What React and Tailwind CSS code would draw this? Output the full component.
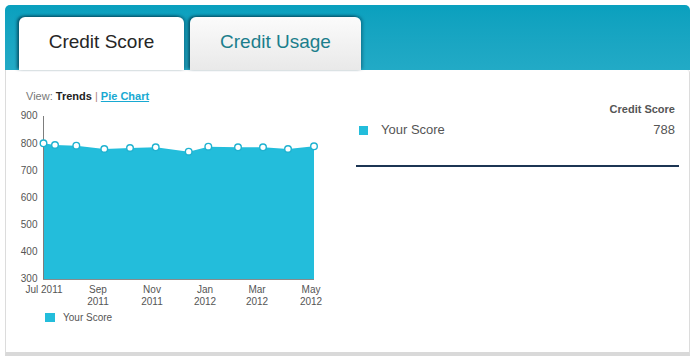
import clsx from "clsx";

const FILL = "#23bddb";

// page coordinates (x, y) read off the chart
const POINTS = [
  [43.5, 143.3],
  [55, 145],
  [76.3, 145.7],
  [104.3, 149],
  [130, 148],
  [155.7, 147.3],
  [188.7, 151.7],
  [208.3, 146.7],
  [238, 147.3],
  [263, 147.3],
  [288, 149],
  [314, 146.3],
];

const Y_TICKS = [
  ["900", 115],
  ["800", 143],
  ["700", 170],
  ["600", 197],
  ["500", 224],
  ["400", 251],
  ["300", 278],
];

const X_TICKS = [
  ["Jul 2011", null, 44],
  ["Sep", "2011", 98],
  ["Nov", "2011", 152],
  ["Jan", "2012", 205],
  ["Mar", "2012", 257],
  ["May", "2012", 311],
];

function Tab({ label, active }) {
  return (
    <div
      className={clsx(
        "flex h-[53px] justify-center rounded-t-[6px] pt-[14px] text-[19px] leading-[22px] shadow-[-2px_-1px_3px_rgba(0,55,75,0.7),2px_-1px_3px_rgba(0,55,75,0.35)]",
        active
          ? "w-[165px] bg-white text-[#262626]"
          : "w-[171px] bg-gradient-to-b from-[#fbfbfb] to-[#e9e9e9] text-[#1b7e8c]"
      )}
    >
      {label}
    </div>
  );
}

function TrendChart() {
  const line = POINTS.map(([x, y]) => `${x},${y}`).join(" ");
  const area = `43.5,279.5 ${line} 314,279.5`;

  return (
    <svg width="350" height="240" viewBox="6 103 350 240" className="block">
      <polygon points={area} fill={FILL} />
      <line x1="43.5" y1="116" x2="43.5" y2="280" stroke="#7d7d7d" strokeWidth="1" />
      <line x1="43" y1="279.5" x2="314" y2="279.5" stroke="#8a8a8a" strokeWidth="1" />
      {Y_TICKS.map(([label, y]) => (
        <text key={label} x="37.5" y={y + 3.5} textAnchor="end" fontSize="10" fill="#555">
          {label}
        </text>
      ))}
      {X_TICKS.map(([a, b, x]) => (
        <text key={a} textAnchor="middle" fontSize="10" fill="#555">
          <tspan x={x} y="293">{a}</tspan>
          {b ? <tspan x={x} y="305">{b}</tspan> : null}
        </text>
      ))}
      {POINTS.map(([x, y]) => (
        <circle key={x} cx={x} cy={y} r="3.3" fill="#fff" stroke="#1fb2d0" strokeWidth="1.4" />
      ))}
      <rect x="45" y="313" width="10" height="9" fill={FILL} />
      <text x="63" y="320.5" fontSize="10" fill="#555">Your Score</text>
    </svg>
  );
}

export default function App() {
  return (
    <div
      className="h-[362px] w-[696px] bg-white pt-[5px] pl-[5px]"
      style={{ fontFamily: '"Liberation Sans", Arial, sans-serif' }}
    >
      <div className="w-[685px]">
        <div className="flex h-[65px] items-end gap-[6px] rounded-t-[5px] bg-gradient-to-b from-[#09a0be] to-[#22aac6] pl-[14px]">
          <Tab label="Credit Score" active />
          <Tab label="Credit Usage" />
        </div>

        <div className="flex h-[286px] rounded-tr-[3px] border-x border-b-[4px] border-x-[#dcdcdc] border-b-[#d9d9d9] bg-white">
          <div className="flex w-[350px] flex-col">
            <p className="pl-[20px] pt-[19px] text-[11px] leading-[14px] text-[#777]">
              View: <span className="font-bold text-[#222]">Trends</span>{" "}
              <span className="text-[#b08080]">|</span>{" "}
              <span className="font-bold text-[#18a9d2] underline">Pie Chart</span>
            </p>
            <TrendChart />
          </div>

          <div className="flex-1 pr-[10px] pt-[33px]">
            <p className="pr-[4px] text-right text-[11px] font-bold leading-[13px] text-[#555]">
              Credit Score
            </p>
            <div className="mt-[6px] flex h-[16px] items-center pl-[3px] pr-[4px] text-[13px] text-[#555]">
              <span className="h-[9px] w-[9px] bg-[#23bddb]" />
              <span className="ml-[13px]">Your Score</span>
              <span className="ml-auto">788</span>
            </div>
            <div className="mt-[27px] h-[2px] bg-[#1c3553]" />
          </div>
        </div>
      </div>
    </div>
  );
}
